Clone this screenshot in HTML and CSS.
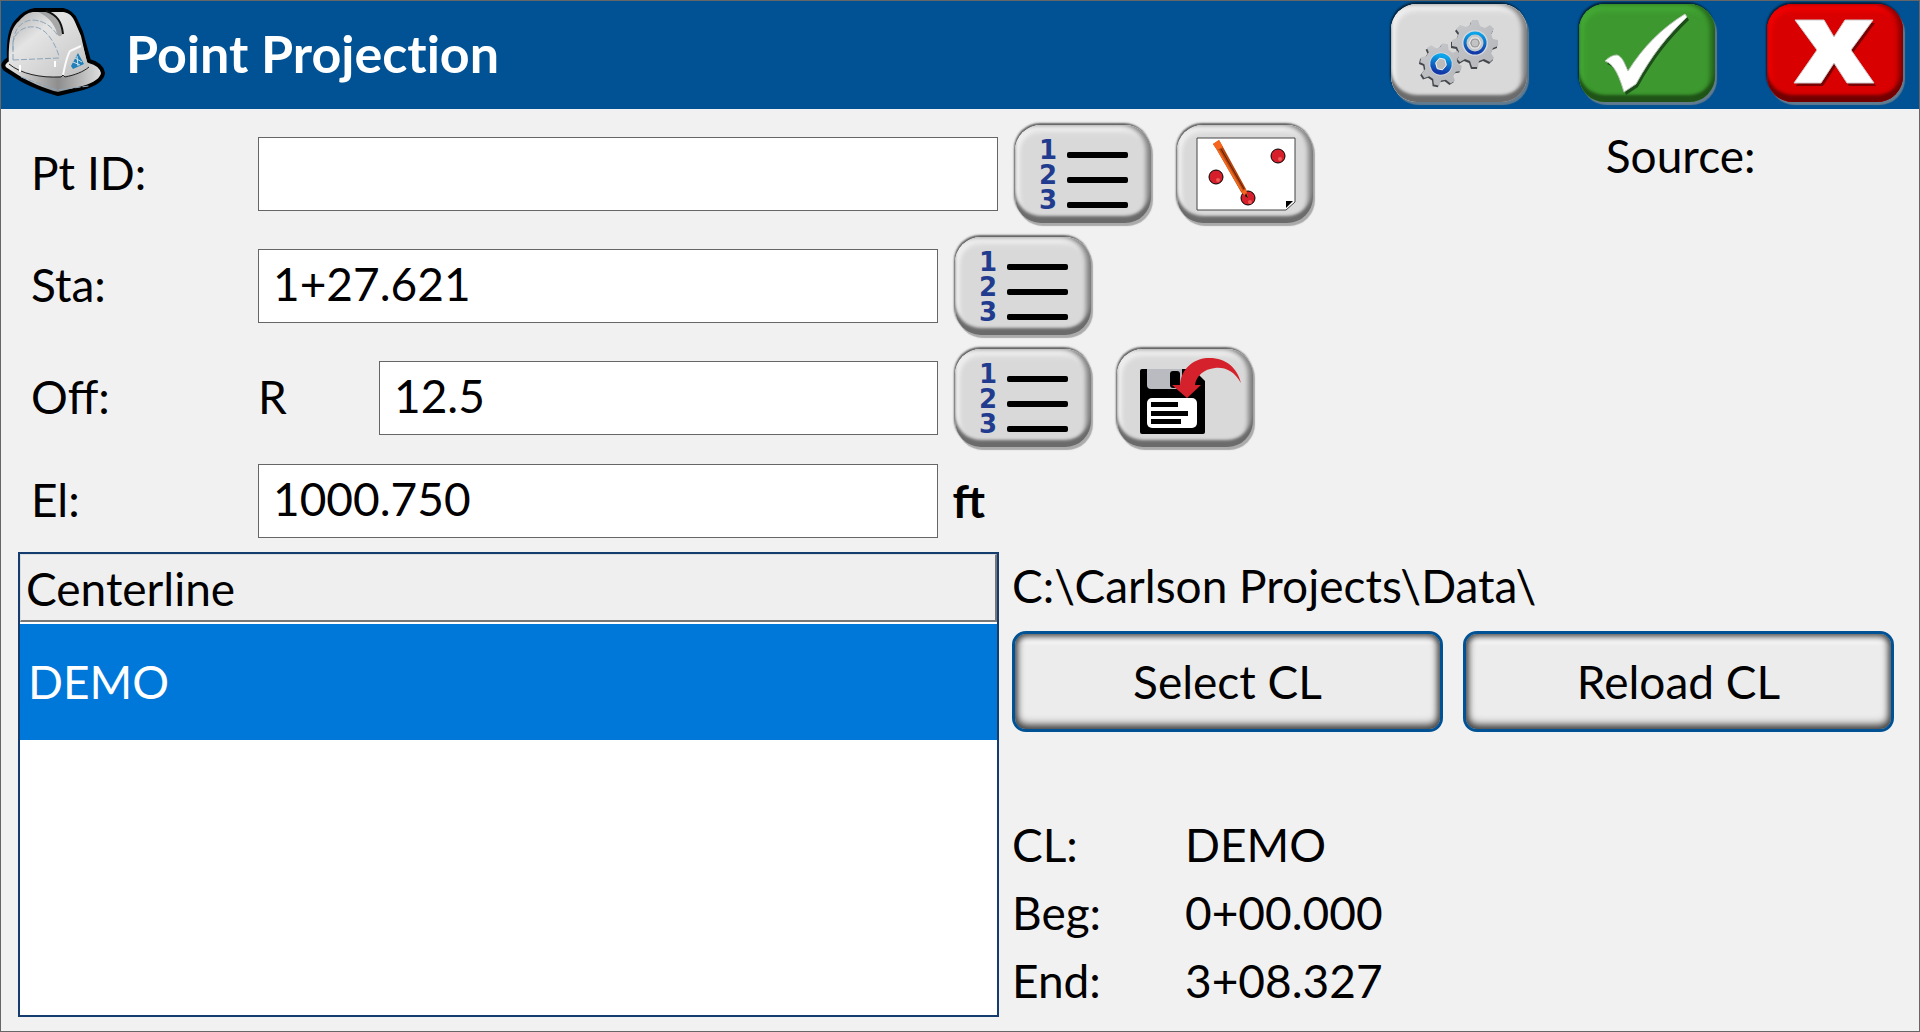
FILE: index.html
```html
<!DOCTYPE html>
<html lang="en">
<head>
<meta charset="utf-8">
<title>Point Projection</title>
<link rel="stylesheet" href="styles.css">
</head>
<body>
<svg width="0" height="0" class="defs" aria-hidden="true">
  <defs>
    <linearGradient id="ring" x1="0" y1="0" x2="0" y2="1"><stop offset="0" stop-color="#0aa5ea"/><stop offset="1" stop-color="#1338a8"/></linearGradient>
    <linearGradient id="steel" x1="0" y1="0" x2="1" y2="1"><stop offset="0" stop-color="#c6c8cb"/><stop offset="1" stop-color="#b4b6ba"/></linearGradient>
    <linearGradient id="dome" x1="0" y1="0" x2="1" y2="1"><stop offset="0" stop-color="#a9a9a9"/><stop offset=".35" stop-color="#e4e4e4"/><stop offset=".7" stop-color="#d2d2d2"/><stop offset="1" stop-color="#bcbcbc"/></linearGradient>
    <linearGradient id="brim" x1="0" y1="0" x2="1" y2="0"><stop offset="0" stop-color="#ececec"/><stop offset=".55" stop-color="#8e8e8e"/><stop offset="1" stop-color="#e2e2e2"/></linearGradient>
    <symbol id="list" viewBox="0 0 136 98">
      <g class="digits"><text x="24" y="34">1</text><text x="24" y="59">2</text><text x="24" y="84">3</text></g>
      <rect x="52" y="27" width="61" height="6" rx="2"/><rect x="52" y="52" width="61" height="6" rx="2"/><rect x="52" y="77" width="61" height="6" rx="2"/>
    </symbol>
    <path id="cog" d="M-3-23H3L5-17 10-15 15-18 19-14 16-9 18-4 23-3V3L18 5 16 10 19 15 15 19 9 16 4 18 3 24H-3L-5 18-10 16-15 19-19 15-16 9-18 4-23 3V-3L-18-5-16-10-19-14-15-18-9-16-5-18Z"/>
  </defs>
</svg>
<div class="window">
  <header class="bar">
    <svg class="hat" viewBox="0 8 106 90" aria-hidden="true">
      <path d="M8 59C7 40 9 27 17 20C23 13 28 11 34 10H62C70 12 73 16 75 21L80 32L88 61C96 63 101 67 102 73C101 81 92 85 82 88L57 94C44 91 26 83 18 78L4 69C1 66 2 62 8 59Z" fill="url(#brim)" stroke="#000" stroke-width="4" stroke-linejoin="round"/>
      <path d="M8 64C7 40 10 28 18 21C24 14 28 12 34 12H62C69 13 72 17 74 22L80 36L87 67C80 72 72 75 64 76C40 78 20 74 8 64Z" fill="url(#dome)"/>
      <path d="M8 64C20 74 40 78 60 77L62 75L64 77C74 75 82 72 88 67" fill="none" stroke="#222" stroke-width="1"/>
      <path d="M45 12C57 15 61 23 62 33C59 39 56 36 55 30C51 20 44 15 37 12Z" fill="#8f8f8f" opacity=".7"/>
      <path d="M45 11C57 15 61 23 62 34" fill="none" stroke="#111" stroke-width="2"/>
      <path d="M12 50C11 32 18 22 30 20C44 20 52 28 57 36M12 60V42C15 29 26 26 34 27C46 29 54 43 58 56M12 60L58 58M20 77L56 90L88 86" fill="none" stroke="#8ca5ba" stroke-width="1" stroke-dasharray="6 2"/>
      <path d="M62 75C64 66 65 58 69 51L80 46" fill="none" stroke="#fafafa" stroke-width="2"/>
      <path d="M19 65V72M54 61V67" stroke="#fff" stroke-width="2"/>
      <path d="M77 53L83 64L72 69L70 66Z" fill="#2180b8"/>
      <path d="M74 58L81 62M72 62L79 65M76 56L77 66" stroke="#cfe4f0" stroke-width="1"/>
    </svg>
    <h1>Point Projection</h1>
    <div class="actions">
      <button class="key" type="button" aria-label="Settings">
        <svg viewBox="0 0 136 98" aria-hidden="true">
          <g transform="translate(84 39)"><use href="#cog" x="-1" y="2" fill="#44484d"/><use href="#cog" fill="url(#steel)"/><circle r="13" fill="#d0d6dc"/><circle r="10" fill="#c6c9cc" stroke="url(#ring)" stroke-width="3"/><path d="M-3-5H3L6 0 3 5H-3L-6 0Z" fill="#bbb" stroke="#ededed" stroke-width="1"/><circle r="4" fill="#c3c3c3" stroke="#999"/></g>
          <g transform="translate(50 60) rotate(12) scale(.9)"><use href="#cog" x="-1" y="2" fill="#44484d"/><use href="#cog" fill="url(#steel)"/><circle r="13" fill="#d0d6dc"/><circle r="9" fill="#b9c4d0" stroke="url(#ring)" stroke-width="6"/><path d="M-3-6H3L6 0 3 6H-3L-6 0Z" fill="#bbb" stroke="#f2f2f2" stroke-width="1"/></g>
        </svg>
      </button>
      <button class="key ok" type="button" aria-label="OK">
        <svg viewBox="0 0 136 98" aria-hidden="true">
          <path d="M26 57C30 53 34 51 38 51C43 52 46 60 49 67C64 43 83 24 106 10L108 13C88 32 73 51 57 80L45 88C41 75 36 60 26 57Z" fill="#1d4d19" transform="translate(2 3)"/>
          <path d="M26 57C30 53 34 51 38 51C43 52 46 60 49 67C64 43 83 24 106 10L108 13C88 32 73 51 57 80L45 88C41 75 36 60 26 57Z" fill="#fff" stroke="#b5c7b3" stroke-width="1"/>
        </svg>
      </button>
      <button class="key cancel" type="button" aria-label="Cancel">
        <svg viewBox="0 0 136 98" aria-hidden="true">
          <path d="M28 16H57L67 33L78 16H106L84 46L107 79H80L67 59L54 79H27L50 46Z" fill="#7d0000" transform="translate(2 3)"/>
          <path d="M28 16H57L67 33L78 16H106L84 46L107 79H80L67 59L54 79H27L50 46Z" fill="#fff" stroke="#ccc" stroke-width="1"/>
        </svg>
      </button>
    </div>
  </header>

  <form class="fields">
    <div class="row">
      <label for="ptid">Pt ID:</label>
      <input id="ptid" class="wide" type="text">
      <div class="tools">
        <button class="key" type="button" aria-label="Point list"><svg viewBox="0 0 136 98" aria-hidden="true"><use href="#list"/></svg></button>
        <button class="key" type="button" aria-label="Pick from map">
          <svg viewBox="0 0 136 98" aria-hidden="true">
            <path d="M20 13H118V77L109 85H20Z" fill="#fff" stroke="#444" stroke-width="1"/>
            <path d="M109 76H116L109 83Z"/>
            <g fill="#d71f2b" stroke="#000" stroke-width="1"><circle cx="39" cy="52" r="7"/><circle cx="101" cy="31" r="7"/><circle cx="71" cy="73" r="7"/></g>
            <g fill="#ef5a55"><circle cx="41" cy="55" r="2"/><circle cx="103" cy="34" r="2"/><circle cx="73" cy="77" r="2"/></g>
            <path d="M36 19L42 15L46 22L69 64L71 73L64 67L40 25Z" fill="#b5460f"/>
            <path d="M36 19L42 15L46 22L40 25ZM64 67L69 64L71 73Z" fill="#f7661e"/>
            <path d="M41 25L65 66" stroke="#f0691f" stroke-width="2"/><path d="M44 24L67 64" stroke="#5c1d00" stroke-width="1"/><path d="M69 68L71 73L68 71Z"/>
          </svg>
        </button>
      </div>
      <span class="source">Source:</span>
    </div>
    <div class="row">
      <label for="sta">Sta:</label>
      <input id="sta" type="text" value="1+27.621">
      <div class="tools">
        <button class="key" type="button" aria-label="Station list"><svg viewBox="0 0 136 98" aria-hidden="true"><use href="#list"/></svg></button>
      </div>
    </div>
    <div class="row">
      <label for="off">Off:</label>
      <div class="offset"><span class="side">R</span><input id="off" type="text" value="12.5"></div>
      <div class="tools">
        <button class="key" type="button" aria-label="Offset list"><svg viewBox="0 0 136 98" aria-hidden="true"><use href="#list"/></svg></button>
        <button class="key" type="button" aria-label="Load offset">
          <svg viewBox="0 0 136 98" aria-hidden="true">
            <path d="M25 20H76L88 32V83Q88 85 86 85H25Q23 85 23 83V22Q23 20 25 20Z"/>
            <path d="M30 20H65V40H34Q30 40 30 36Z" fill="#b9bbc0"/><rect x="53" y="22" width="10" height="17" rx="3"/>
            <rect x="30" y="49" width="50" height="30" rx="5" fill="#fff"/>
            <path d="M34 53H61V58H34ZM34 62H71V67H34ZM34 70H64V75H34Z"/>
            <path d="M55 36H63C64 20 76 10 90 9C108 8 120 18 124 34C117 22 108 18 98 19C87 20 79 27 78 36H84L70 49Z" fill="#d4212b"/>
          </svg>
        </button>
      </div>
    </div>
    <div class="row short">
      <label for="el">El:</label>
      <input id="el" type="text" value="1000.750">
      <div class="tools"><strong class="unit">ft</strong></div>
    </div>
  </form>

  <main class="lower">
    <div class="listbox">
      <table>
        <thead><tr><th scope="col">Centerline</th></tr></thead>
        <tbody><tr><td>DEMO</td></tr></tbody>
      </table>
    </div>
    <section class="side-panel">
      <p class="path">C:\Carlson Projects\Data\</p>
      <div class="pair">
        <button class="push" type="button">Select CL</button>
        <button class="push" type="button">Reload CL</button>
      </div>
      <dl class="info">
        <dt>CL:</dt><dd>DEMO</dd>
        <dt>Beg:</dt><dd>0+00.000</dd>
        <dt>End:</dt><dd>3+08.327</dd>
      </dl>
    </section>
  </main>
</div>
</body>
</html>
```
FILE: styles.css
```css
* {
  box-sizing: border-box;
}

body {
  margin: 0;
  background: #f1f1f1;
  color: #000;
  font: 46px/56px Lato, "Open Sans", sans-serif;
}

button,
input {
  font: inherit;
  color: inherit;
}

.defs {
  position: absolute;
}

.window {
  display: flex;
  flex-direction: column;
  min-height: 100vh;
  border: 1px solid #666;
}

.bar {
  display: flex;
  align-items: center;
  height: 108px;
  padding-right: 16px;
  background: #005294;
  color: #fff;
}

.hat {
  width: 106px;
  height: 90px;
  margin-bottom: 4px;
}

.bar h1 {
  margin: 0 0 4px 19px;
  font-size: 52px;
  line-height: 60px;
  font-weight: 700;
  font-variant-ligatures: none;
  white-space: nowrap;
}

.actions {
  display: flex;
  gap: 52px;
  margin: 0 0 4px auto;
}

.key {
  flex: none;
  width: 136px;
  height: 98px;
  padding: 0;
  border: 0;
  border-radius: 26px;
  background: #d9d9d9;
  box-shadow: inset 0 -7px 3px #6b6b6b, inset -5px 0 4px #888, inset 0 7px 5px #ededed, inset 5px 0 4px #efefef, -1px -2px 2px rgba(0, 0, 0, .6), 2px 3px 1px rgba(140, 140, 140, .7);
}

.key svg {
  display: block;
  width: 136px;
  height: 98px;
}

.key.ok {
  background: #3d992f;
  box-shadow: inset 0 -7px 3px #1f5317, inset -5px 0 4px #286b1e, inset 0 7px 5px #43a834, inset 5px 0 4px #43a834, -1px -2px 2px rgba(0, 0, 0, .6), 2px 3px 1px rgba(140, 140, 140, .7);
}

.key.cancel {
  background: #d80000;
  box-shadow: inset 0 -7px 3px #720000, inset -5px 0 4px #920000, inset 0 7px 5px #f00000, inset 5px 0 4px #ee0000, -1px -2px 2px rgba(0, 0, 0, .6), 2px 3px 1px rgba(140, 140, 140, .7);
}

.digits {
  font: 700 26px "DejaVu Sans", sans-serif;
  fill: #213c8f;
}

.fields {
  padding: 9px 0 0 30px;
}

.row {
  display: grid;
  grid-template-columns: 227px 680fr 60px 607fr 313fr;
  align-items: center;
  height: 112px;
}

.row.short {
  height: 94px;
}

.row label,
.side {
  padding-bottom: 2px;
}

.row input {
  width: 100%;
  min-width: 0;
  height: 74px;
  padding: 0 14px 6px;
  border: 1px solid #666;
  border-radius: 0;
  background: #fff;
}

.row .wide {
  grid-column: 2 / 4;
}

.tools {
  grid-column: 3 / 5;
  display: flex;
  gap: 26px;
  padding-left: 17px;
}

.wide + .tools {
  grid-column: 4;
}

.source {
  padding-bottom: 36px;
}

.offset {
  display: flex;
  align-items: center;
}

.side {
  flex: 0 0 121px;
}

.unit {
  margin-left: -3px;
}

.lower {
  flex: 1;
  display: grid;
  grid-template-columns: 981fr 882fr;
  gap: 13px;
  padding: 4px 25px 14px 17px;
}

.listbox {
  border: 2px solid #143c6e;
  background: #fff;
}

.listbox table {
  width: 100%;
  border-collapse: separate;
  border-spacing: 0;
}

.listbox th {
  height: 68px;
  padding: 2px 5px 0;
  border: 1px solid #ddd;
  border-right: 2px solid #777;
  border-bottom: 2px solid #777;
  background: #efefef;
  font-weight: 400;
  text-align: left;
}

.listbox td {
  height: 118px;
  padding: 0 8px;
  border-top: 2px solid #fff;
  background: #0078d9;
  color: #fff;
}

.side-panel {
  display: flex;
  flex-direction: column;
}

.path {
  margin: 6px 0 17px;
}

.pair {
  display: flex;
  gap: 20px;
}

.push {
  flex: 1;
  height: 101px;
  padding: 0;
  border: 3px solid #005294;
  border-radius: 14px;
  background: #ececec;
  box-shadow: inset 0 -3px 8px 1px #444, inset 0 1px 6px 1px #555, inset 0 10px 2px #f5f5f5;
}

.info {
  display: grid;
  grid-template-columns: 173px 1fr;
  row-gap: 12px;
  margin: auto 0 8px;
}

.info dd {
  margin: 0;
}
```
